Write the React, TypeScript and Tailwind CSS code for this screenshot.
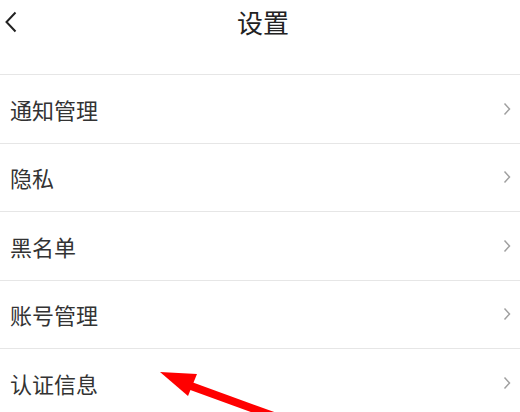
const items = ["通知管理", "隐私", "黑名单", "账号管理", "认证信息"];

const ChevronRight = () => (
  <svg width="10" height="14" viewBox="0 0 10 14" fill="none" stroke="#a0a0a0" strokeWidth="1.5">
    <path d="M2.5 1.5 L7.5 7 L2.5 12.5" />
  </svg>
);

export default function App() {
  return (
    <div
      className="relative w-[520px] h-[412px] overflow-hidden bg-white"
      style={{ fontFamily: '"Noto Sans CJK SC", "Noto Sans", sans-serif' }}
    >
      {/* Header */}
      <div className="relative flex items-center justify-center h-[44px]">
        <button className="absolute left-[3px] top-[10px] p-0">
          <svg width="16" height="24" viewBox="0 0 16 24" fill="none" stroke="#222" strokeWidth="2">
            <path d="M12.5 2.5 L3.5 12 L12.5 21.5" />
          </svg>
        </button>
        <h1 className="text-[26px] leading-none text-[#222] ml-[6px]">设置</h1>
      </div>

      {/* List */}
      <ul className="mt-[30px] border-t border-[#e6e6e6]">
        {items.map((label) => (
          <li
            key={label}
            className="flex items-center justify-between h-[68.5px] border-b border-[#e6e6e6] pl-[10px] pr-[8px]"
          >
            <span className="text-[22px] leading-none text-[#333]">{label}</span>
            <ChevronRight />
          </li>
        ))}
      </ul>

      {/* Annotation arrow */}
      <svg className="absolute left-0 top-0 pointer-events-none" width="520" height="412">
        <line x1="180" y1="382" x2="290" y2="422" stroke="#ff0000" strokeWidth="8" />
        <polygon points="160,372 197,374 188,396" fill="#ff0000" />
      </svg>
    </div>
  );
}
